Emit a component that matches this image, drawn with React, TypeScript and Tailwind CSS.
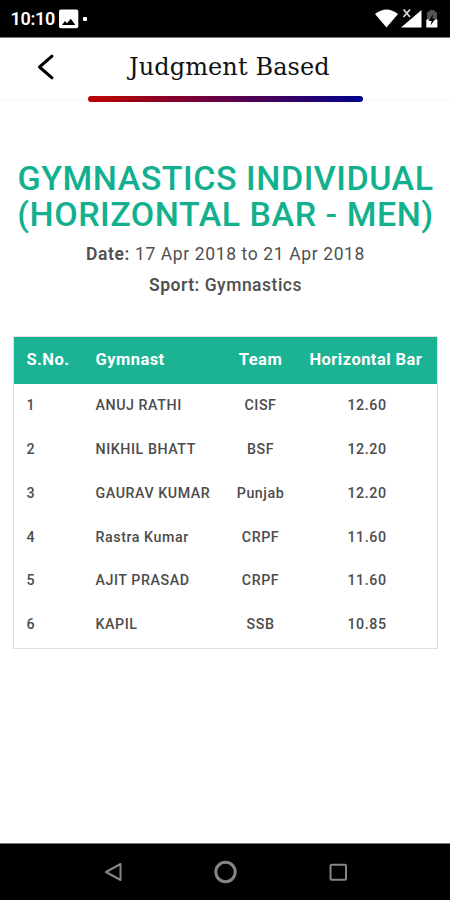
import React from "react";

type Row = { name: string; team: string; score: string };

const rows: Row[] = [
  { name: "ANUJ RATHI", team: "CISF", score: "12.60" },
  { name: "NIKHIL BHATT", team: "BSF", score: "12.20" },
  { name: "GAURAV KUMAR", team: "Punjab", score: "12.20" },
  { name: "Rastra Kumar", team: "CRPF", score: "11.60" },
  { name: "AJIT PRASAD", team: "CRPF", score: "11.60" },
  { name: "KAPIL", team: "SSB", score: "10.85" },
];

function StatusBar() {
  return (
    <div className="flex h-[38px] shrink-0 items-center border-b border-[#777] bg-black pl-[10.5px] text-white">
      <span className="text-[18px] font-semibold tracking-[-0.3px]">10:10</span>
      <svg className="ml-[3.5px]" width="20" height="20" viewBox="0 0 20 20">
        <rect x="0" y="0.5" width="19.3" height="18.7" rx="2" fill="#fff" />
        <path d="M3 16 L6 12 L8 14.2 L11.8 9.8 L16.3 16 Z" fill="#000" />
      </svg>
      <span className="ml-[4.5px] size-[4px] rounded-[1px] bg-white" />
      <svg className="ml-auto" width="75" height="22" viewBox="375 8 75 22">
        <path d="M375 14 Q386.5 5 398 14 L386.5 27.5 Z" fill="#fff" />
        <path d="M401 27.5 L421.5 10 V27.5 Z" fill="#fff" />
        <path d="M403.5 9.5 L410 17 M410 9.5 L403.5 17" stroke="#000" strokeWidth="3.6" />
        <path d="M403.5 9.5 L410 17 M410 9.5 L403.5 17" stroke="#ddd" strokeWidth="1.7" />
        <path d="M427 19.5 V13 Q427 11.5 429 11.5 L430 10 H434 L435 11.5 Q437 11.5 437 13 V19.5 Z" fill="#555" />
        <path d="M426.3 19.5 H437.4 V27.5 H426.3 Z" fill="#fff" />
        <path d="M433 14 L428.8 21 H431.7 L430.5 25.5 L435.3 18.7 H432.4 Z" fill="#000" />
      </svg>
    </div>
  );
}

function Header() {
  return (
    <header className="flex h-[65px] shrink-0 flex-col">
      <div className="flex h-[58px] items-center">
        <svg className="ml-[36px]" width="20" height="28" viewBox="0 0 20 28">
          <path d="M16 3.2 L3.5 14 L16 24.8" fill="none" stroke="#000" strokeWidth="3" strokeLinecap="round" strokeLinejoin="round" />
        </svg>
        <h1 className="ml-[73px] whitespace-nowrap font-['DejaVu_Serif',serif] text-[24px] leading-[32px] tracking-[0.1px] text-[#111]">
          Judgment Based
        </h1>
      </div>
      <div className="flex h-[6px] items-center justify-between">
        <span className="h-[3px] w-[88px] bg-[#fafafa]" />
        <span className="h-[6px] w-[275px] rounded-[3px] bg-[linear-gradient(to_right,#c00000,#00008c)]" />
        <span className="h-[3px] w-[87px] bg-[#fafafa]" />
      </div>
    </header>
  );
}

function Results() {
  return (
    <div className="ml-[13px] mr-[12px] mt-[35px] h-[313px] border border-[#dedede]">
      <div className="grid h-[47px] grid-cols-[81.5px_117px_97px_127.5px] items-center bg-[#1bb394] text-[16.5px] font-bold tracking-[0.45px] text-white">
        <span className="pl-[12.5px]">S.No.</span>
        <span>Gymnast</span>
        <span className="pr-[1px] text-center">Team</span>
        <span className="whitespace-nowrap">Horizontal Bar</span>
      </div>
      {rows.map((r, i) => (
        <div
          key={i}
          className="grid h-[43.8px] grid-cols-[81.5px_117px_97px_115px] items-center text-[14.25px] font-medium tracking-[0.55px] text-[#4c4c4c]"
        >
          <span className="pl-[12.5px]">{i + 1}</span>
          <span className="whitespace-nowrap">{r.name}</span>
          <span className="pr-[1px] text-center">{r.team}</span>
          <span className="text-center">{r.score}</span>
        </div>
      ))}
    </div>
  );
}

export default function App() {
  return (
    <div className="flex h-[900px] w-[450px] flex-col overflow-hidden bg-white font-[Roboto,sans-serif]">
      <StatusBar />
      <Header />
      <main className="grow">
        <h2 className="mt-[57px] pl-[1px] text-center text-[34px] font-medium leading-[36px] tracking-[0.53px] text-[#12b08e]">
          <span className="block whitespace-nowrap">GYMNASTICS INDIVIDUAL</span>
          <span className="block whitespace-nowrap">(HORIZONTAL BAR - MEN)</span>
        </h2>
        <p className="mt-[7px] pl-[1px] text-center text-[17.5px] leading-[31px] tracking-[0.62px] text-[#505050]">
          <b className="font-semibold">Date:</b> 17 Apr 2018 to 21 Apr 2018
        </p>
        <p className="pl-[1px] text-center text-[17.5px] font-medium leading-[31px] tracking-[0.5px] text-[#505050]">
          <b className="font-semibold">Sport:</b> Gymnastics
        </p>
        <Results />
      </main>
      <nav className="flex h-[57px] shrink-0 items-center border-t border-[#777] bg-black">
        <svg width="450" height="56" viewBox="0 844 450 56" fill="none" stroke="#858585" strokeWidth="2">
          <path d="M106 872 L120.5 864 V880 Z" strokeLinejoin="round" />
          <circle cx="225.5" cy="872" r="9.7" strokeWidth="3" />
          <rect x="330.5" y="864.7" width="15.5" height="15" rx="1" />
        </svg>
      </nav>
    </div>
  );
}
